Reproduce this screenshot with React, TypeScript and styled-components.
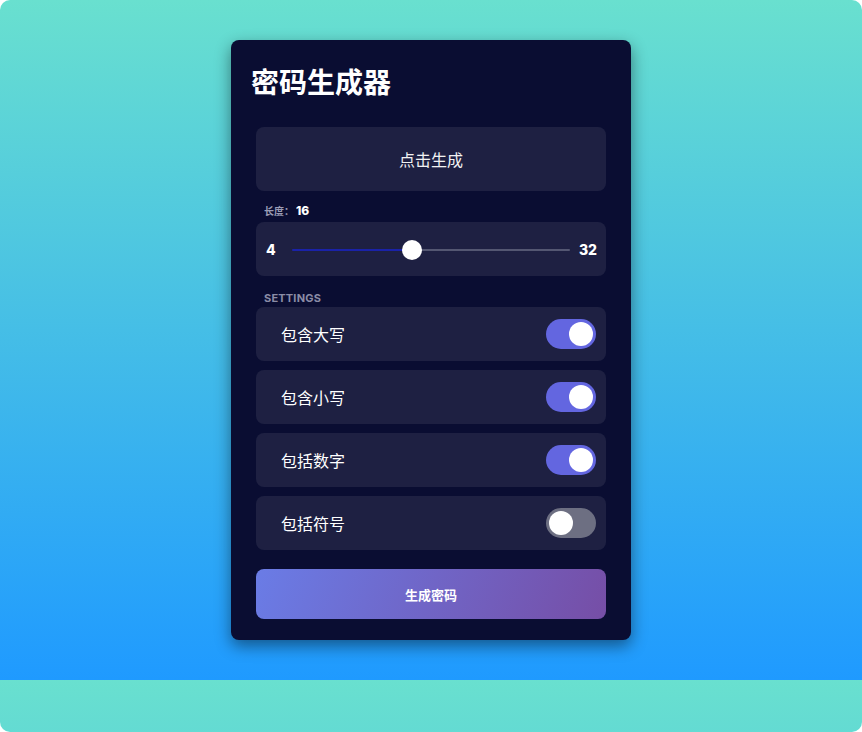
import { useState } from 'react';
import styled, { createGlobalStyle } from 'styled-components';

const GlobalStyle = createGlobalStyle`
  html {
    background: #ffffff;
  }
  body {
    margin: 0;
    height: 732px;
    overflow: hidden;
    border-radius: 10px;
    background: linear-gradient(180deg, #69e0cf 0%, #1f9aff 100%);
    background-size: 100% 680px;
    background-repeat: repeat-y;
    font-family: 'Inter', 'Noto Sans CJK SC', sans-serif;
  }
`;

const Page = styled.main`
  display: flex;
  justify-content: center;
  padding: 40px 0;
`;

const Card = styled.section`
  width: 400px;
  height: 600px;
  box-sizing: border-box;
  padding: 20px;
  background: #0a0d32;
  border-radius: 8px;
  box-shadow: 0 6px 16px rgba(0, 0, 0, 0.45);
  display: flex;
  flex-direction: column;
`;

const Title = styled.h1`
  margin: 0 0 25px;
  font-size: 28px;
  line-height: 42px;
  font-weight: 700;
  color: #ffffff;
  font-family: 'Noto Sans CJK SC', sans-serif;
`;

const Body = styled.div`
  display: flex;
  flex-direction: column;
  padding: 0 5px;
`;

const Panel = styled.div`
  background: #1e2042;
  border-radius: 8px;
`;

const ResultBox = styled(Panel)`
  height: 64px;
  display: flex;
  align-items: center;
  justify-content: center;
  color: #f2f2f2;
  font-size: 16px;
  font-family: 'Noto Sans CJK SC', sans-serif;
`;

const SmallLabel = styled.div`
  margin: 14px 0 5px 8px;
  font-size: 10px;
  line-height: 12px;
  color: #9a9cb5;
  font-weight: 600;
  b {
    color: #ffffff;
    font-size: 12px;
    font-weight: 800;
    margin-left: 2px;
  }
`;

const SliderBox = styled(Panel)`
  height: 54px;
  display: flex;
  align-items: center;
  padding: 0 9px 0 10px;
  color: #ffffff;
  font-weight: 800;
  font-size: 14px;
`;

const Range = styled.input`
  flex: 1;
  margin: 1px 9px 0 16px;
  height: 20px;
  appearance: none;
  -webkit-appearance: none;
  background: transparent;
  &::-webkit-slider-runnable-track {
    height: 2px;
    background: var(--track);
    border-radius: 1px;
  }
  &::-webkit-slider-thumb {
    -webkit-appearance: none;
    width: 20px;
    height: 20px;
    margin-top: -9px;
    border-radius: 50%;
    background: #ffffff;
    border: none;
  }
`;

const SectionLabel = styled.div`
  margin: 16px 0 0 8px;
  font-size: 11px;
  line-height: 12px;
  font-weight: 700;
  color: #8a8ca6;
  letter-spacing: 0.2px;
`;

const SettingList = styled.div`
  display: flex;
  flex-direction: column;
  gap: 9px;
  margin-top: 3px;
`;

const SettingRow = styled(Panel)`
  height: 54px;
  display: flex;
  align-items: center;
  justify-content: space-between;
  padding: 0 10px 0 25px;
  color: #ffffff;
  font-size: 16px;
  font-family: 'Noto Sans CJK SC', sans-serif;
`;

const Toggle = styled.button<{ $on: boolean }>`
  width: 50px;
  height: 30px;
  border: none;
  padding: 3px;
  border-radius: 15px;
  background: ${(p) => (p.$on ? '#6366e0' : '#6d6f82')};
  display: flex;
  justify-content: ${(p) => (p.$on ? 'flex-end' : 'flex-start')};
  cursor: pointer;
`;

const Knob = styled.span`
  width: 24px;
  height: 24px;
  border-radius: 50%;
  background: #ffffff;
`;

const GenerateButton = styled.button`
  margin-top: 19px;
  height: 50px;
  border: none;
  border-radius: 8px;
  background: linear-gradient(110deg, #6a7ce6 0%, #764ea6 100%);
  color: #ffffff;
  font-size: 13px;
  font-weight: 700;
  font-family: 'Noto Sans CJK SC', sans-serif;
  cursor: pointer;
`;

const settingsList = [
  { key: 'upper', label: '包含大写' },
  { key: 'lower', label: '包含小写' },
  { key: 'number', label: '包括数字' },
  { key: 'symbol', label: '包括符号' },
];

export default function App() {
  const [length, setLength] = useState(16);
  const [opts, setOpts] = useState<Record<string, boolean>>({
    upper: true,
    lower: true,
    number: true,
    symbol: false,
  });

  const pct = ((length - 4) / (32 - 4)) * 100;

  return (
    <>
      <GlobalStyle />
      <Page>
        <Card>
          <Title>密码生成器</Title>
          <Body>
            <ResultBox>点击生成</ResultBox>
            <SmallLabel>
              长度：<b>{length}</b>
            </SmallLabel>
            <SliderBox>
              <span>4</span>
              <Range
                type="range"
                min={4}
                max={32}
                value={length}
                onChange={(e) => setLength(Number(e.target.value))}
                style={
                  {
                    '--track': `linear-gradient(90deg, #1a22a8 ${pct}%, #545772 ${pct}%)`,
                  } as React.CSSProperties
                }
              />
              <span>32</span>
            </SliderBox>
            <SectionLabel>SETTINGS</SectionLabel>
            <SettingList>
              {settingsList.map((s) => (
                <SettingRow key={s.key}>
                  {s.label}
                  <Toggle
                    $on={opts[s.key]}
                    onClick={() => setOpts({ ...opts, [s.key]: !opts[s.key] })}
                  >
                    <Knob />
                  </Toggle>
                </SettingRow>
              ))}
            </SettingList>
            <GenerateButton>生成密码</GenerateButton>
          </Body>
        </Card>
      </Page>
    </>
  );
}
